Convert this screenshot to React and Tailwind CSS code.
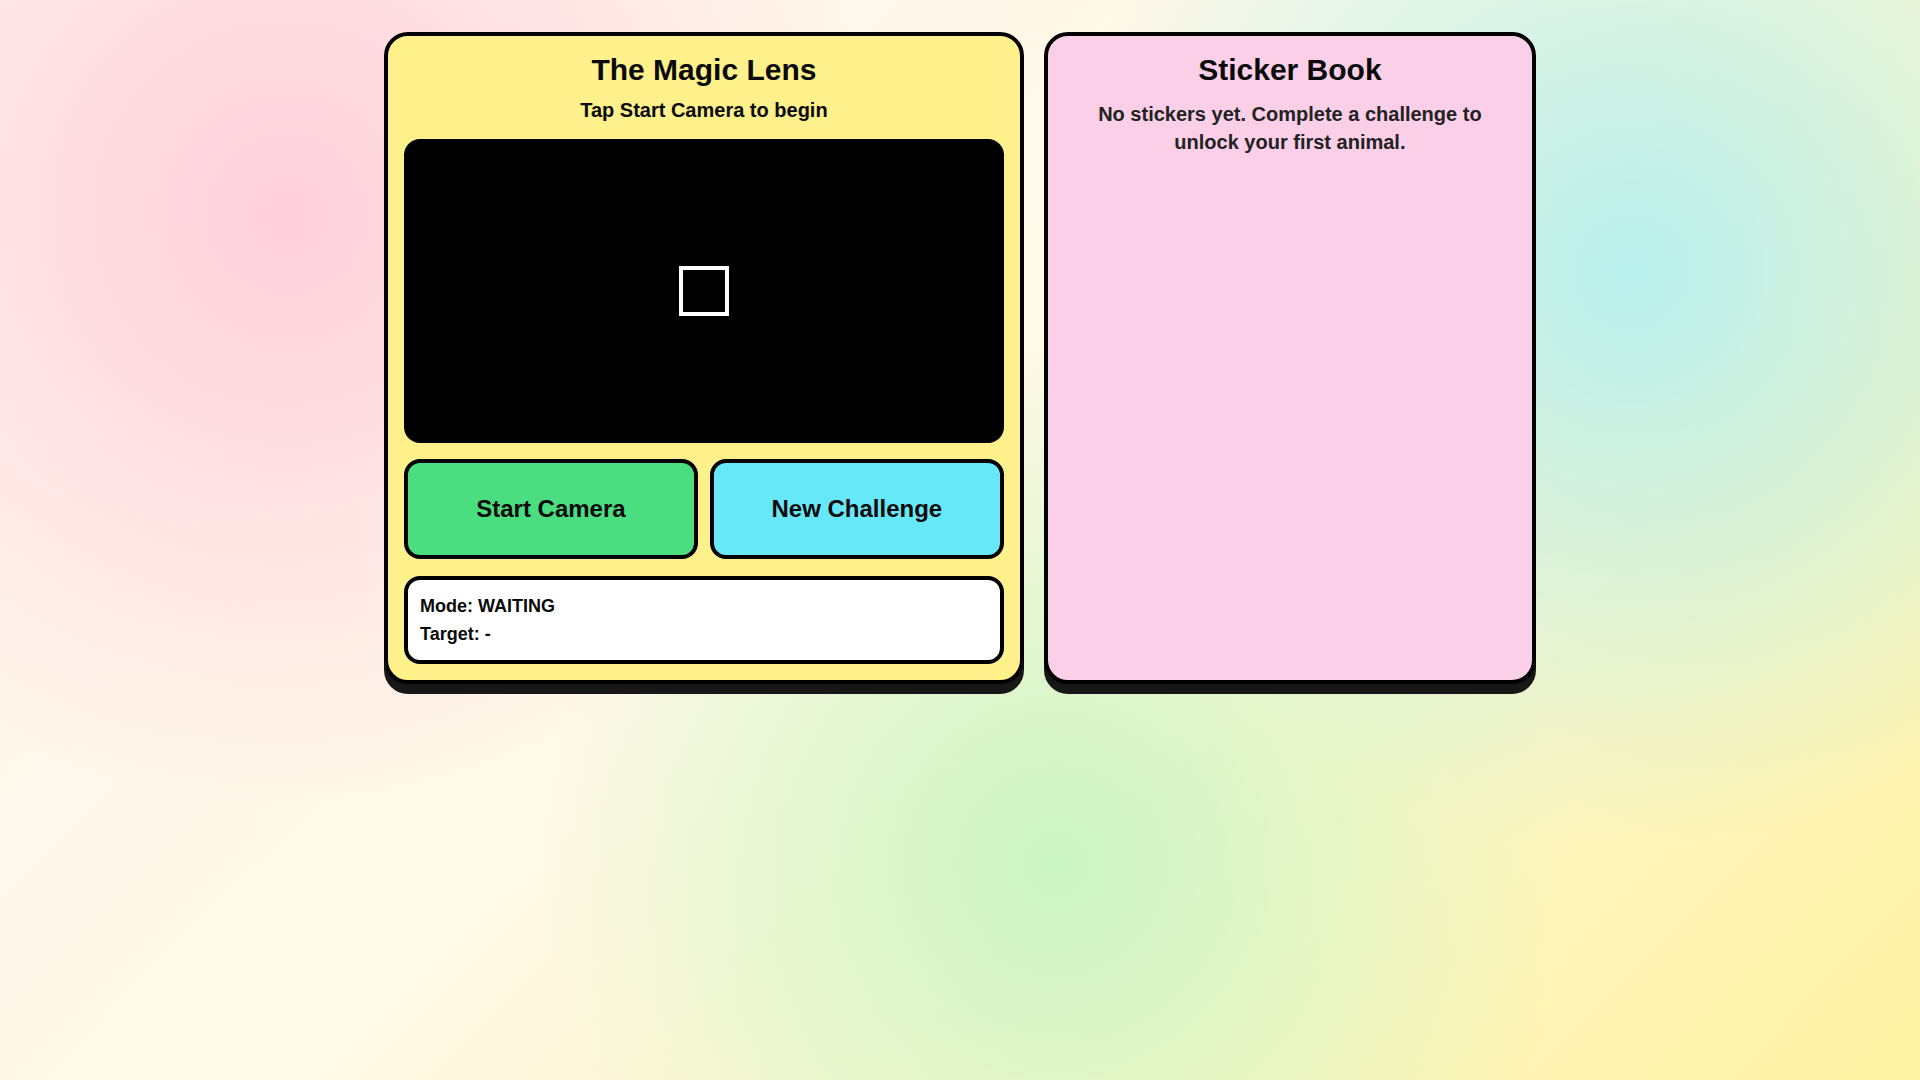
import React from "react";

export default function App() {
  return (
    <div className="min-h-screen w-full bg-[radial-gradient(circle_at_15%_20%,#ffcfdc_0%,transparent_32%),radial-gradient(circle_at_85%_25%,#b8efec_0%,transparent_32%),radial-gradient(circle_at_55%_80%,#ccf5c6_0%,transparent_38%),linear-gradient(135deg,#fff5ef_0%,#fff9e8_45%,#fef2a2_100%)] px-8 pt-8 pb-8 font-['Liberation_Sans',Arial,sans-serif]">
      <div className="mx-auto grid max-w-[1152px] grid-cols-[1.3fr_1fr] gap-5">
        <section className="flex flex-col rounded-3xl border-4 border-black bg-[#fef08a] p-4 shadow-[0_10px_0_#171717]">
          <h1 className="text-center text-[30px] leading-[36px] font-bold text-[#0a0a0a]">The Magic Lens</h1>
          <p className="mt-[10px] text-center text-xl leading-6 font-bold text-[#0a0a0a]">Tap Start Camera to begin</p>
          <div className="mt-[17px] flex h-[304px] items-center justify-center rounded-2xl bg-black">
            <div className="h-[50px] w-[50px] border-4 border-white"></div>
          </div>
          <div className="mt-4 grid grid-cols-2 gap-3">
            <button className="h-[100px] rounded-2xl border-4 border-black bg-[#4ade80] text-2xl font-bold text-[#0a0a0a]">
              Start Camera
            </button>
            <button className="h-[100px] rounded-2xl border-4 border-black bg-[#67e8f9] text-2xl font-bold text-[#0a0a0a]">
              New Challenge
            </button>
          </div>
          <div className="mt-[17px] rounded-2xl border-4 border-black bg-white px-3 py-3 text-lg leading-7 font-bold text-[#0a0a0a]">
            <div>Mode: WAITING</div>
            <div>Target: -</div>
          </div>
        </section>
        <section className="flex flex-col rounded-3xl border-4 border-black bg-[#fbcfe8] p-4 shadow-[0_10px_0_#171717]">
          <h2 className="text-center text-[30px] leading-[36px] font-bold text-[#0a0a0a]">Sticker Book</h2>
          <p className="mt-[12px] text-center text-xl leading-7 font-bold text-[#222]">
            No stickers yet. Complete a challenge to unlock your first animal.
          </p>
        </section>
      </div>
    </div>
  );
}
